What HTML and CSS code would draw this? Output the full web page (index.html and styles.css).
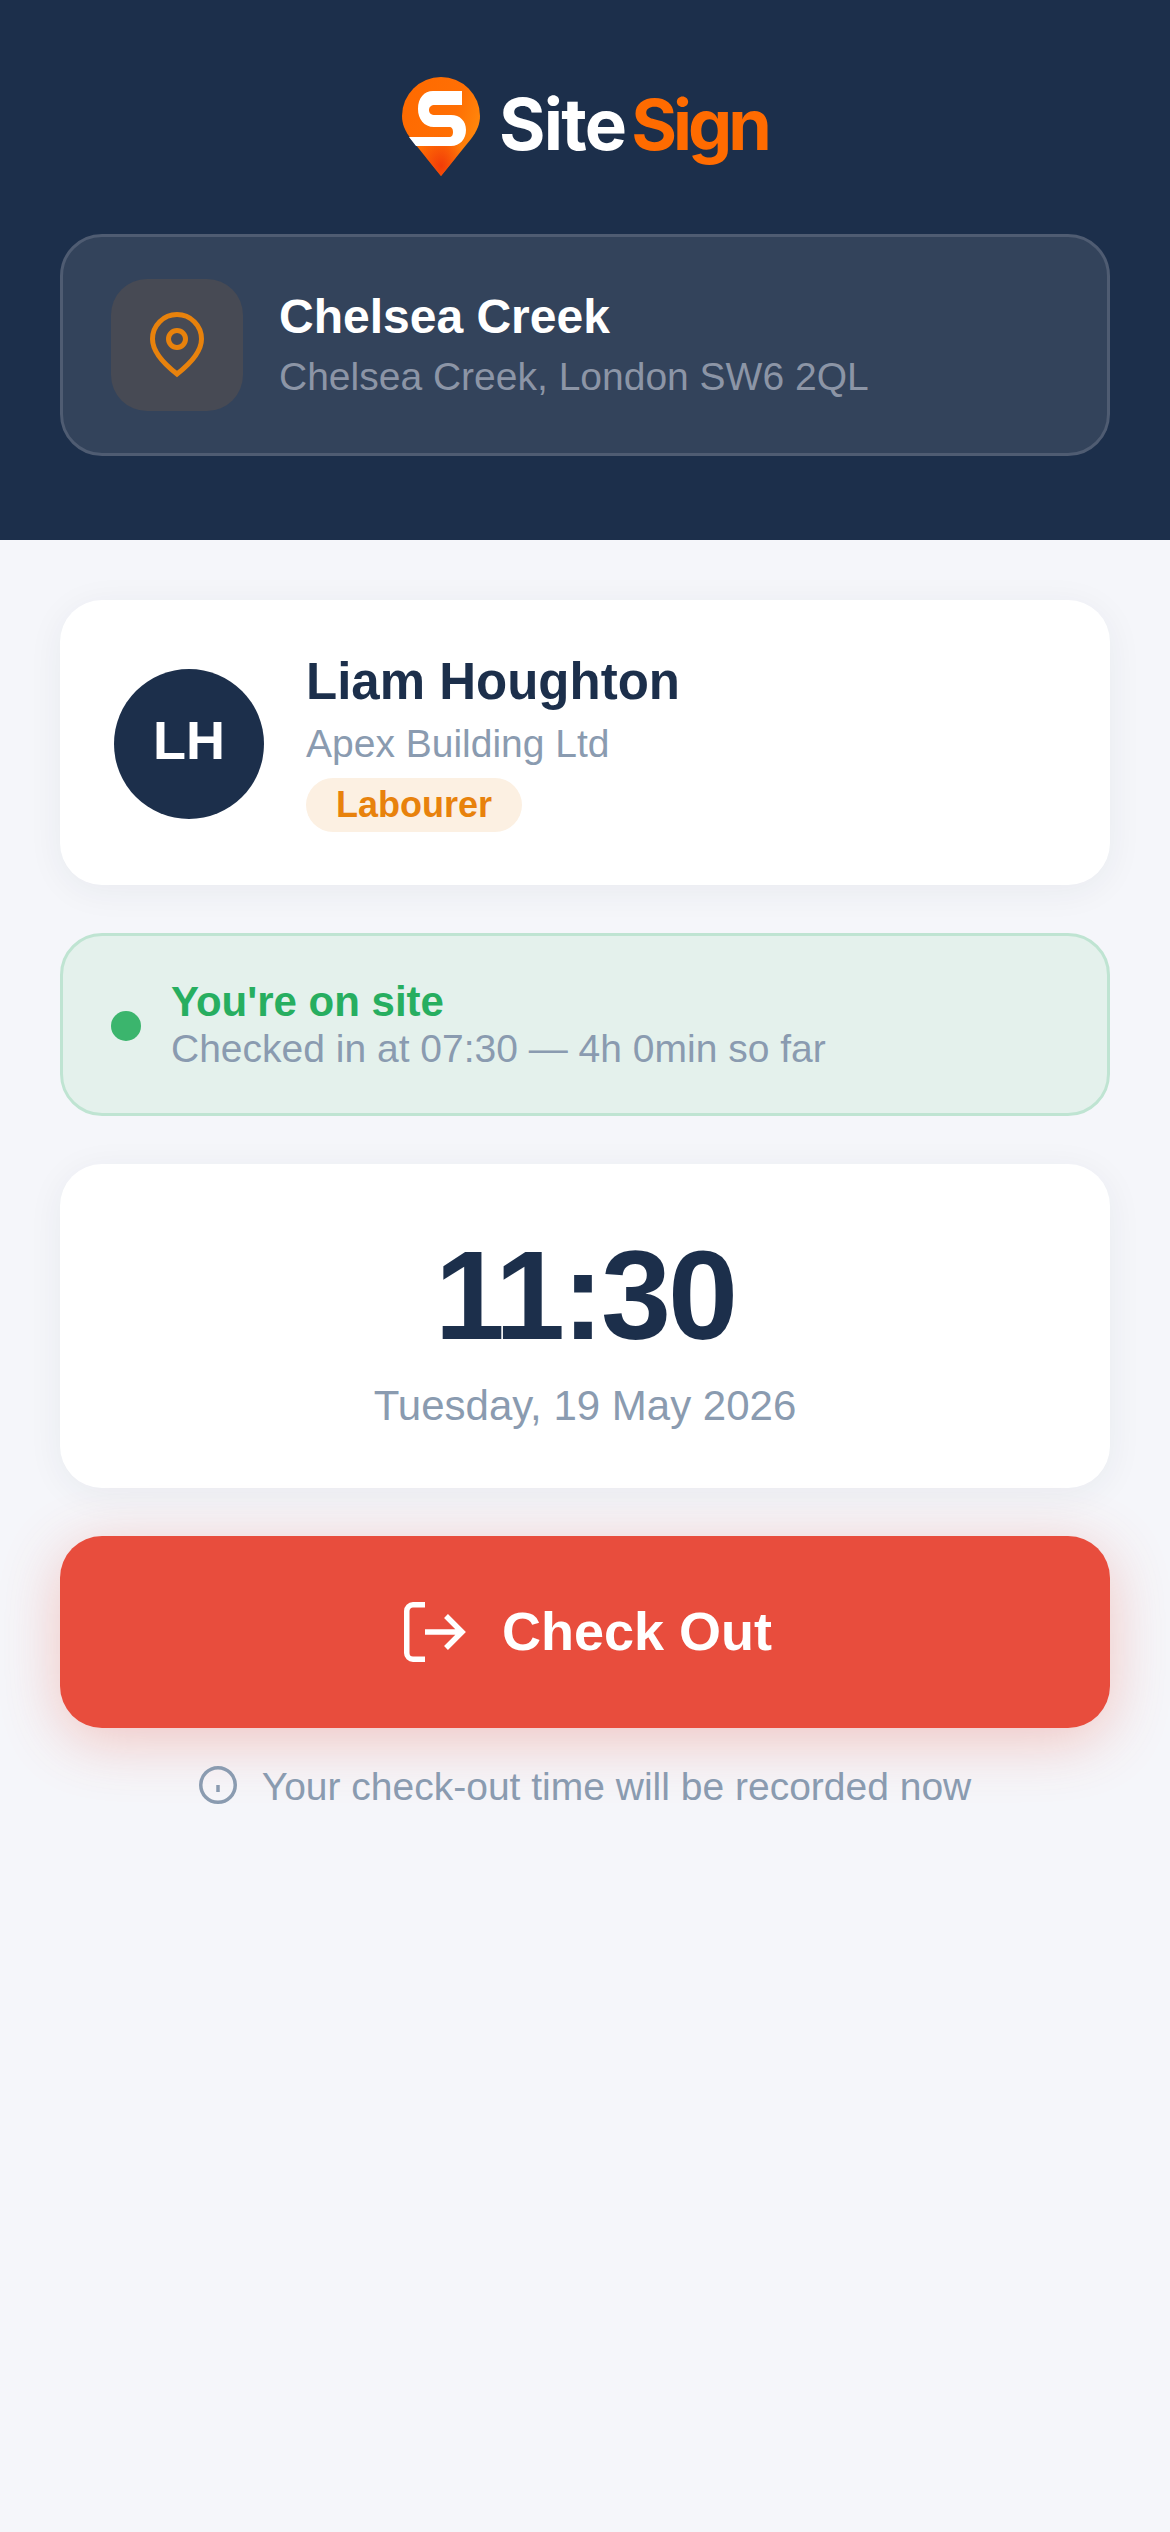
FILE: index.html
```html
<!DOCTYPE html>
<html lang="en">
<head>
    <meta charset="UTF-8">
    <meta name="viewport" content="width=device-width, initial-scale=1.0">
    <title>SiteSign - Check Out</title>
    <link rel="stylesheet" href="styles.css">
</head>
<body>

    <header class="header">
        <div class="logo">
            <svg class="logo-pin" viewBox="0 0 78 99" width="78" height="99">
                <defs>
                    <linearGradient id="pin-fill" x1="0" y1="0.2" x2="1" y2="0.6">
                        <stop offset="0" stop-color="#ff6a00"/>
                        <stop offset="0.65" stop-color="#ff6f04"/>
                        <stop offset="1" stop-color="#ff8a0c"/>
                    </linearGradient>
                    <radialGradient id="pin-tip" cx="0.5" cy="0.9" r="0.32">
                        <stop offset="0" stop-color="#f23c08"/>
                        <stop offset="1" stop-color="#f23c08" stop-opacity="0"/>
                    </radialGradient>
                </defs>
                <path d="M39 99 L9 62 C3 54 0 47 0 39 A39 39 0 0 1 78 39 C78 47 75 54 69 62 Z" fill="url(#pin-fill)"/>
                <path d="M39 99 L9 62 C3 54 0 47 0 39 A39 39 0 0 1 78 39 C78 47 75 54 69 62 Z" fill="url(#pin-tip)"/>
                <path d="M60 14 H31 C22 14 16 21 16 32 C16 42 22 50 32 50 H47 C50 50 51 52 51 55 C51 58 50 60 47 60 H7 L14 69 H49 C58 69 64 62 64 53 C64 44 58 38 49 38 H33 C29 38 27 36 27 33 C27 30 29 28 33 28 H60 Z" fill="#fff"/>
            </svg>
            <div class="logo-text">Site<span class="logo-accent">Sign</span></div>
        </div>

        <div class="site-card">
            <div class="site-icon">
                <svg viewBox="0 0 54 66" width="54" height="66" fill="none" stroke="#e8820c" stroke-width="5">
                    <path d="M27 62 C18 55 2.5 42 2.5 27 A24.5 24.5 0 0 1 51.5 27 C51.5 42 36 55 27 62 Z"/>
                    <circle cx="27" cy="27" r="8.5"/>
                </svg>
            </div>
            <div class="site-info">
                <div class="site-name">Chelsea Creek</div>
                <div class="site-address">Chelsea Creek, London SW6 2QL</div>
            </div>
        </div>
    </header>

    <main class="main">
        <section class="card worker">
            <div class="avatar">LH</div>
            <div class="worker-info">
                <div class="worker-name">Liam Houghton</div>
                <div class="worker-company">Apex Building Ltd</div>
                <span class="badge">Labourer</span>
            </div>
        </section>

        <section class="status">
            <span class="status-dot"></span>
            <div>
                <div class="status-title">You're on site</div>
                <div class="status-detail">Checked in at 07:30 — 4h 0min so far</div>
            </div>
        </section>

        <section class="card clock">
            <div class="clock-time">11:30</div>
            <div class="clock-date">Tuesday, 19 May 2026</div>
        </section>

        <div>
            <button class="checkout-btn">
                <svg viewBox="0 0 62 60" width="62" height="60" fill="none" stroke="#fff" stroke-width="5.5">
                    <path d="M21 2.75 H9 A6.25 6.25 0 0 0 2.75 9 V51 A6.25 6.25 0 0 0 9 57.25 H21"/>
                    <path d="M21 30 H58 M42 14 L58 30 L42 46"/>
                </svg>
                Check Out
            </button>
            <p class="note">
                <svg viewBox="0 0 38 38" width="38" height="38" fill="none" stroke="#8a9bb0" stroke-width="3.5">
                    <circle cx="19" cy="19" r="17.25"/>
                    <path d="M19 19 V26"/>
                </svg>
                Your check-out time will be recorded now
            </p>
        </div>
    </main>

</body>
</html>
```

FILE: styles.css
```css
* {
    margin: 0;
    padding: 0;
    box-sizing: border-box;
    font-family: 'Liberation Sans', Arial, sans-serif;
}

body {
    background: #f5f6fa;
    min-height: 100vh;
}

.header {
    background: #1c2f4b;
    height: 540px;
    padding: 77px 60px 0;
}

.logo {
    display: flex;
    justify-content: center;
    align-items: flex-start;
    gap: 19px;
    height: 157px;
}

.logo-text {
    font-family: 'Inter', sans-serif;
    font-size: 71px;
    line-height: 94px;
    font-weight: 700;
    letter-spacing: -1.8px;
    color: #fff;
}

.logo-accent {
    font-family: 'Inter', sans-serif;
    font-size: 70px;
    letter-spacing: -4px;
    margin-left: 6px;
    color: #ff6b00;
}

.site-card {
    display: flex;
    align-items: center;
    gap: 36px;
    height: 222px;
    padding: 0 48px;
    background: #33435b;
    border: 3px solid #4f5c72;
    border-radius: 42px;
}

.site-icon {
    width: 132px;
    height: 132px;
    flex-shrink: 0;
    display: flex;
    justify-content: center;
    align-items: center;
    background: #474a54;
    border-radius: 36px;
}

.site-info {
    margin-bottom: 3px;
}

.site-name {
    font-size: 48px;
    line-height: 60px;
    font-weight: 700;
    color: #fff;
}

.site-address {
    font-size: 39px;
    line-height: 48px;
    margin-top: 6px;
    color: #8c95a6;
}

.main {
    padding: 60px;
    display: flex;
    flex-direction: column;
    gap: 48px;
}

.card {
    background: #fff;
    border-radius: 42px;
    box-shadow: 0 6px 36px rgba(28, 47, 75, 0.06);
}

.worker {
    height: 285px;
    padding: 0 54px;
    display: flex;
    align-items: center;
    gap: 42px;
}

.avatar {
    width: 150px;
    height: 150px;
    flex-shrink: 0;
    margin-top: 3px;
    padding-bottom: 8px;
    display: flex;
    justify-content: center;
    align-items: center;
    background: #1c2f4b;
    border-radius: 50%;
    color: #fff;
    font-size: 54px;
    font-weight: 700;
}

.worker-info {
    margin-bottom: 2px;
}

.worker-name {
    font-size: 51px;
    line-height: 60px;
    font-weight: 700;
    color: #1c2f4b;
}

.worker-company {
    font-size: 39px;
    line-height: 48px;
    margin-top: 8px;
    color: #8a9bb0;
}

.badge {
    display: block;
    width: fit-content;
    margin-top: 10px;
    padding: 0 30px;
    height: 54px;
    line-height: 54px;
    font-size: 36px;
    font-weight: 700;
    color: #e8820c;
    background: #fcf0e2;
    border-radius: 27px;
}

.status {
    height: 183px;
    padding: 0 48px;
    display: flex;
    align-items: center;
    gap: 30px;
    background: #e4f1ec;
    border: 3px solid #bfe4d2;
    border-radius: 42px;
}

.status-dot {
    width: 30px;
    height: 30px;
    flex-shrink: 0;
    margin-top: 3px;
    background: #3bb56d;
    border-radius: 50%;
}

.status-title {
    font-size: 42px;
    line-height: 48px;
    font-weight: 700;
    color: #27ae60;
}

.status-detail {
    font-size: 39px;
    line-height: 45px;
    color: #8a9bb0;
}

.clock {
    height: 324px;
    padding-top: 57px;
    display: flex;
    flex-direction: column;
    align-items: center;
}

.clock-time {
    font-size: 126px;
    line-height: 150px;
    font-weight: 700;
    letter-spacing: -3px;
    color: #1c2f4b;
}

.clock-date {
    font-size: 42px;
    line-height: 54px;
    margin-top: 8px;
    color: #8a9bb0;
}

.checkout-btn {
    width: 100%;
    height: 192px;
    padding-bottom: 2px;
    display: flex;
    justify-content: center;
    align-items: center;
    gap: 36px;
    background: #e84d3d;
    border: none;
    border-radius: 42px;
    color: #fff;
    font-size: 54px;
    font-weight: 700;
    box-shadow: 0 12px 60px rgba(233, 78, 61, 0.3);
}

.checkout-btn svg {
    margin: 2px 0 0 6px;
}

.note {
    display: flex;
    justify-content: center;
    align-items: center;
    gap: 25px;
    margin-top: 35px;
    font-size: 39px;
    line-height: 48px;
    color: #8a9bb0;
}

.note svg {
    margin-bottom: 4px;
}
```
